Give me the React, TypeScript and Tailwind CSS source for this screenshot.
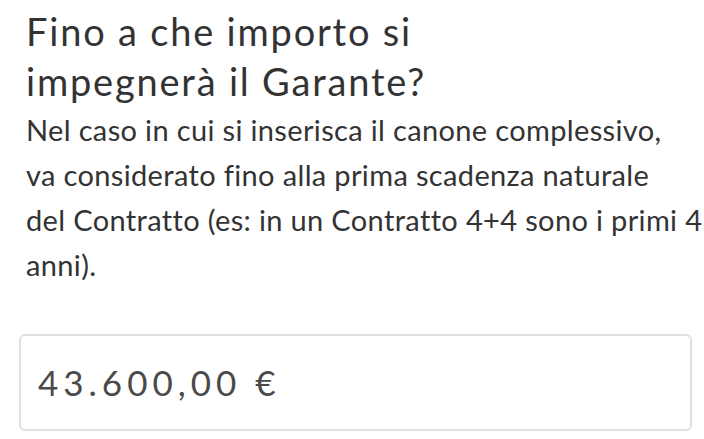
export default function App() {
  return (
    <div className="w-[704px] h-[439px] bg-white overflow-hidden text-[#333333] font-['Lato','Noto_Sans',sans-serif]">
      <div className="pl-[26px] pt-[6px]">
        <h2 className="text-[38px] leading-[50px] font-normal tracking-[1.8px]">
          Fino a che importo si
          <br />
          impegnerà il Garante?
        </h2>
        <p className="mt-[1px] text-[29px] leading-[45px] tracking-[0.35px] whitespace-nowrap">
          Nel caso in cui si inserisca il canone complessivo,
          <br />
          va considerato fino alla prima scadenza naturale
          <br />
          del Contratto (es: in un Contratto 4+4 sono i primi 4
          <br />
          anni).
        </p>
      </div>
      <div className="ml-[19px] mr-[12px] mt-[47px] h-[97px] rounded-[6px] border-2 border-[#dfe0e2] flex items-center px-[17px]">
        <span className="text-[35px] tracking-[5px] text-[#4a4a4a]">43.600,00 €</span>
      </div>
    </div>
  );
}
